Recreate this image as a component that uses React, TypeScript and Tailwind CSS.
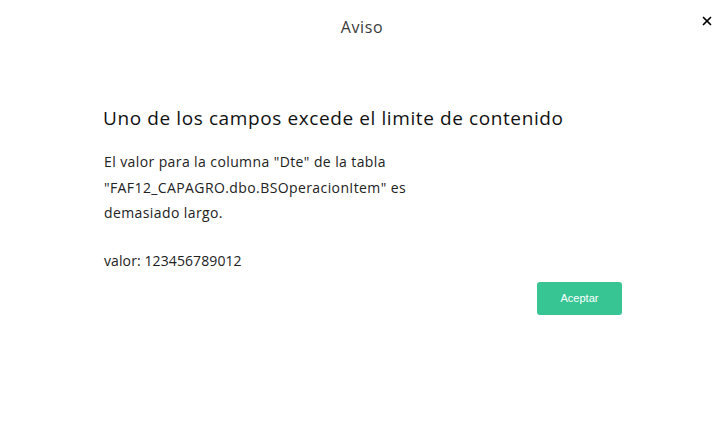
import { X } from 'lucide-react';

const App = () => {
	return (
		<div className="w-[724px] h-[423px] bg-white font-['Open_Sans',sans-serif] text-[#222]">
			<header className="relative flex justify-center items-center h-[54px]">
				<h1 className="text-[16px] text-[#3a3a3a] tracking-[0.6px]">Aviso</h1>
				<button className="absolute right-[10px] top-[14px] text-black">
					<X size={14} strokeWidth={3} />
				</button>
			</header>
			<div className="pl-[103px] pt-[51px]">
				<h2 className="text-[19px] font-medium text-[#111] tracking-[0.6px] leading-[26px]">
					Uno de los campos excede el limite de contenido
				</h2>
				<div className="mt-[18px] pl-px w-[330px] text-[14px] leading-[25.5px] text-[#222] tracking-[0.4px]">
					<p>El valor para la columna "Dte" de la tabla "FAF12_CAPAGRO.dbo.BSOperacionItem" es demasiado largo.</p>
					<p className="mt-[22px] tracking-[0.1px]">valor: 123456789012</p>
				</div>
				<div className="flex justify-end w-[519px] mt-[9px]">
					<button className="w-[85px] h-[33px] rounded-[3px] bg-[#37c594] text-white text-[11px] font-['Liberation_Sans',sans-serif]">
						Aceptar
					</button>
				</div>
			</div>
		</div>
	);
};

export default App;
